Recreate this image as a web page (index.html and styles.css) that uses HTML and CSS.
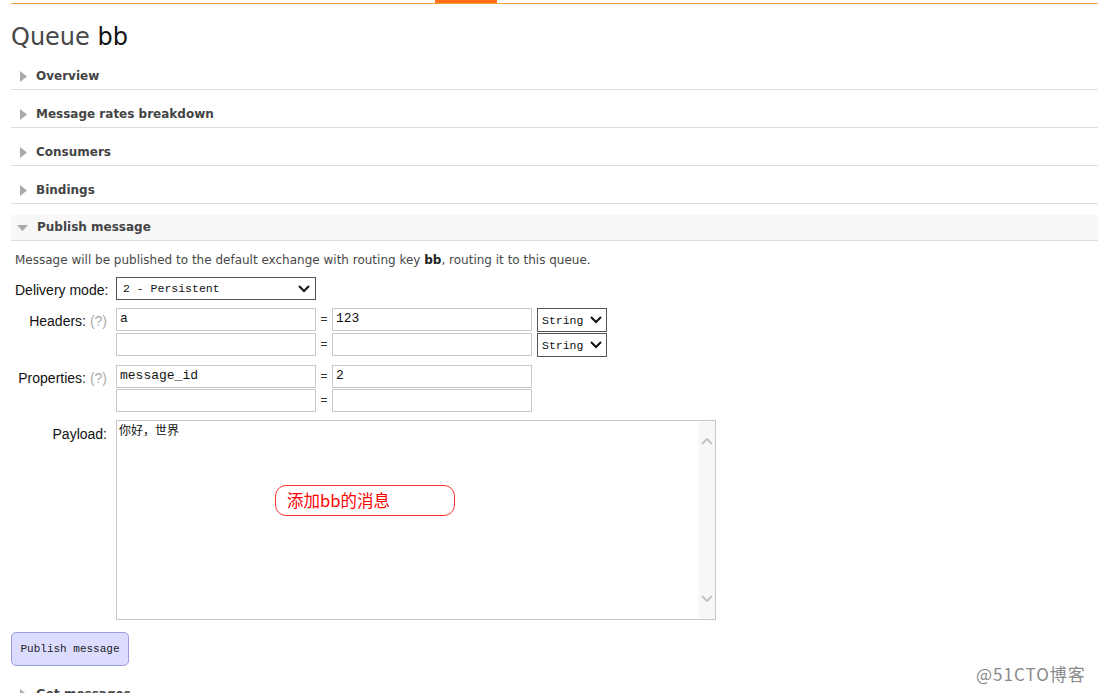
FILE: index.html
```html
<!DOCTYPE html>
<html lang="zh">
<head>
<meta charset="utf-8">
<title>Queue bb</title>
<link rel="stylesheet" href="styles.css">
</head>
<body>
<div class="page">
  <div class="topbar"><div class="tab-active"></div></div>

  <h1 class="title">Queue <span class="title-name">bb</span></h1>

  <div class="section">
    <h2 class="section-head"><svg class="tri-right" width="7" height="11" viewBox="0 0 7 11"><polygon points="0,0 7,5.5 0,11" fill="#aaa"/></svg><span>Overview</span></h2>
  </div>
  <div class="section">
    <h2 class="section-head"><svg class="tri-right" width="7" height="11" viewBox="0 0 7 11"><polygon points="0,0 7,5.5 0,11" fill="#aaa"/></svg><span>Message rates breakdown</span></h2>
  </div>
  <div class="section">
    <h2 class="section-head"><svg class="tri-right" width="7" height="11" viewBox="0 0 7 11"><polygon points="0,0 7,5.5 0,11" fill="#aaa"/></svg><span>Consumers</span></h2>
  </div>
  <div class="section">
    <h2 class="section-head"><svg class="tri-right" width="7" height="11" viewBox="0 0 7 11"><polygon points="0,0 7,5.5 0,11" fill="#aaa"/></svg><span>Bindings</span></h2>
  </div>

  <div class="section open">
    <h2 class="section-head head-open"><svg class="tri-down" width="11" height="6" viewBox="0 0 11 6"><polygon points="0,0 11,0 5.5,6" fill="#aaa"/></svg><span>Publish message</span></h2>
    <div class="section-body">
      <p class="intro">Message will be published to the default exchange with routing key <b>bb</b>, routing it to this queue.</p>

      <div class="form">
        <label class="lbl">Delivery mode:</label>
        <div class="field">
          <div class="select select-wide"><span>2 - Persistent</span><svg width="12" height="8" viewBox="0 0 12 8"><polyline points="1,1 6,6 11,1" fill="none" stroke="#111" stroke-width="2"/></svg></div>
        </div>

        <label class="lbl">Headers: <span class="help">(?)</span></label>
        <div class="field multi">
          <div class="pair pair-hdr">
            <div class="input">a</div><span class="eq">=</span><div class="input">123</div>
            <div class="select select-type"><span>String</span><svg width="12" height="8" viewBox="0 0 12 8"><polyline points="1,1 6,6 11,1" fill="none" stroke="#111" stroke-width="2"/></svg></div>
          </div>
          <div class="pair pair-hdr">
            <div class="input"></div><span class="eq">=</span><div class="input"></div>
            <div class="select select-type"><span>String</span><svg width="12" height="8" viewBox="0 0 12 8"><polyline points="1,1 6,6 11,1" fill="none" stroke="#111" stroke-width="2"/></svg></div>
          </div>
        </div>

        <label class="lbl">Properties: <span class="help">(?)</span></label>
        <div class="field multi">
          <div class="pair">
            <div class="input">message_id</div><span class="eq">=</span><div class="input">2</div>
          </div>
          <div class="pair">
            <div class="input"></div><span class="eq">=</span><div class="input"></div>
          </div>
        </div>

        <label class="lbl lbl-payload">Payload:</label>
        <div class="field">
          <div class="textarea">
            <div class="textarea-text">你好，世界</div>
            <div class="scrollbar">
              <svg width="12" height="8" viewBox="0 0 12 8"><polyline points="1,7 6,2 11,7" fill="none" stroke="#c4c4c4" stroke-width="2"/></svg>
              <svg width="12" height="8" viewBox="0 0 12 8"><polyline points="1,1 6,6 11,1" fill="none" stroke="#c4c4c4" stroke-width="2"/></svg>
            </div>
          </div>
        </div>
      </div>

      <button class="btn" type="button">Publish message</button>
    </div>
  </div>

  <div class="section">
    <h2 class="section-head"><svg class="tri-right" width="7" height="11" viewBox="0 0 7 11"><polygon points="0,0 7,5.5 0,11" fill="#aaa"/></svg><span>Get messages</span></h2>
  </div>
</div>

<div class="callout">添加bb的消息</div>
<div class="watermark">@51CTO博客</div>
</body>
</html>
```

FILE: styles.css
```css
html, body {
  margin: 0;
  padding: 0;
  background: #fff;
  overflow: hidden;
}

body {
  font-family: "DejaVu Sans", Verdana, sans-serif;
  color: #484848;
  width: 1098px;
  height: 693px;
  position: relative;
}

.page {
  padding-left: 11px;
}

.topbar {
  height: 3px;
  border-bottom: 1px solid #eea23a;
  display: flex;
  padding-left: 424px;
}

.tab-active {
  width: 62px;
  height: 3px;
  background: #ff6f1a;
}

.title {
  margin: 18px 0 4px 0;
  font-size: 24px;
  line-height: 30px;
  font-weight: normal;
  color: #484848;
}

.title-name {
  color: #111;
}

.section-head {
  margin: 12px 0 0 0;
  height: 26px;
  box-sizing: border-box;
  padding: 4px 0 4px 9px;
  line-height: 17px;
  font-size: 12px;
  font-weight: bold;
  color: #444;
  border-bottom: 1px solid #ddd;
  display: flex;
  align-items: center;
  gap: 9px;
}

.section.open .section-head {
  margin-top: 11px;
}

.head-open {
  background: #f8f8f8;
  padding-left: 6px;
}

.tri-right, .tri-down {
  flex: none;
}

.section-body {
  padding-bottom: 4px;
}

.intro {
  margin: 11px 0 0 0;
  padding-left: 4px;
  font-size: 12px;
  line-height: 16px;
  color: #484848;
}

.intro b {
  color: #222;
}

.form {
  margin-top: 9px;
  padding-left: 4px;
  display: grid;
  grid-template-columns: 92px auto;
  column-gap: 9px;
  row-gap: 8px;
  align-items: start;
}

.lbl {
  text-align: right;
  font-family: "Liberation Sans", Arial, sans-serif;
  font-size: 14px;
  line-height: 16px;
  padding-top: 5px;
  color: #111;
  white-space: nowrap;
}

.lbl-payload {
  padding-top: 6px;
}

.help {
  color: #aaa;
}

.field {
  display: flex;
  flex-direction: column;
  gap: 1px;
}

.pair {
  display: flex;
  align-items: flex-start;
}

.pair-hdr {
  height: 24px;
}

.input {
  width: 200px;
  height: 23px;
  box-sizing: border-box;
  border: 1px solid #c8c8c8;
  font-family: "Liberation Mono", "Courier New", monospace;
  font-size: 13px;
  line-height: 18px;
  padding: 1px 3px;
  color: #111;
}

.eq {
  width: 16px;
  text-align: center;
  font-family: "Liberation Sans", Arial, sans-serif;
  font-size: 12px;
  line-height: 23px;
  color: #333;
}

.select {
  box-sizing: border-box;
  border: 1px solid #555;
  display: flex;
  align-items: center;
  justify-content: space-between;
  font-family: "Liberation Mono", "Courier New", monospace;
  font-size: 11.5px;
  color: #111;
  background: #fff;
}

.select-wide {
  width: 200px;
  height: 23px;
  padding: 0 5px 0 6px;
}

.select-type {
  width: 70px;
  height: 24px;
  margin-left: 5px;
  padding: 0 4px 0 4px;
}

.textarea {
  width: 600px;
  height: 200px;
  box-sizing: border-box;
  border: 1px solid #c8c8c8;
  display: flex;
}

.textarea-text {
  flex: 1;
  padding: 1px 2px;
  font-family: "Noto Sans CJK SC", "DejaVu Sans", sans-serif;
  font-size: 12px;
  line-height: 16px;
  color: #111;
}

.scrollbar {
  width: 17px;
  background: #f8f8f8;
  display: flex;
  flex-direction: column;
  justify-content: space-between;
  align-items: center;
  padding: 16px 0 16px 0;
}

.btn {
  display: block;
  margin-top: 12px;
  width: 118px;
  height: 34px;
  border: 1px solid #9a9ae0;
  border-radius: 5px;
  background: #dcdcff;
  font-family: "Liberation Mono", "Courier New", monospace;
  font-size: 11px;
  color: #222;
  padding: 0;
}

.callout {
  position: absolute;
  left: 275px;
  top: 485px;
  width: 180px;
  height: 31px;
  box-sizing: border-box;
  border: 1px solid #f33;
  border-radius: 11px;
  padding-left: 11px;
  font-family: "Noto Sans CJK SC", "DejaVu Sans", sans-serif;
  font-size: 16.5px;
  line-height: 29px;
  color: #f00;
}

.watermark {
  position: absolute;
  left: 976px;
  top: 663px;
  font-family: "Noto Sans CJK SC", "Liberation Sans", sans-serif;
  font-size: 17px;
  letter-spacing: 1px;
  line-height: 22px;
  color: #8a8a8a;
}
```
